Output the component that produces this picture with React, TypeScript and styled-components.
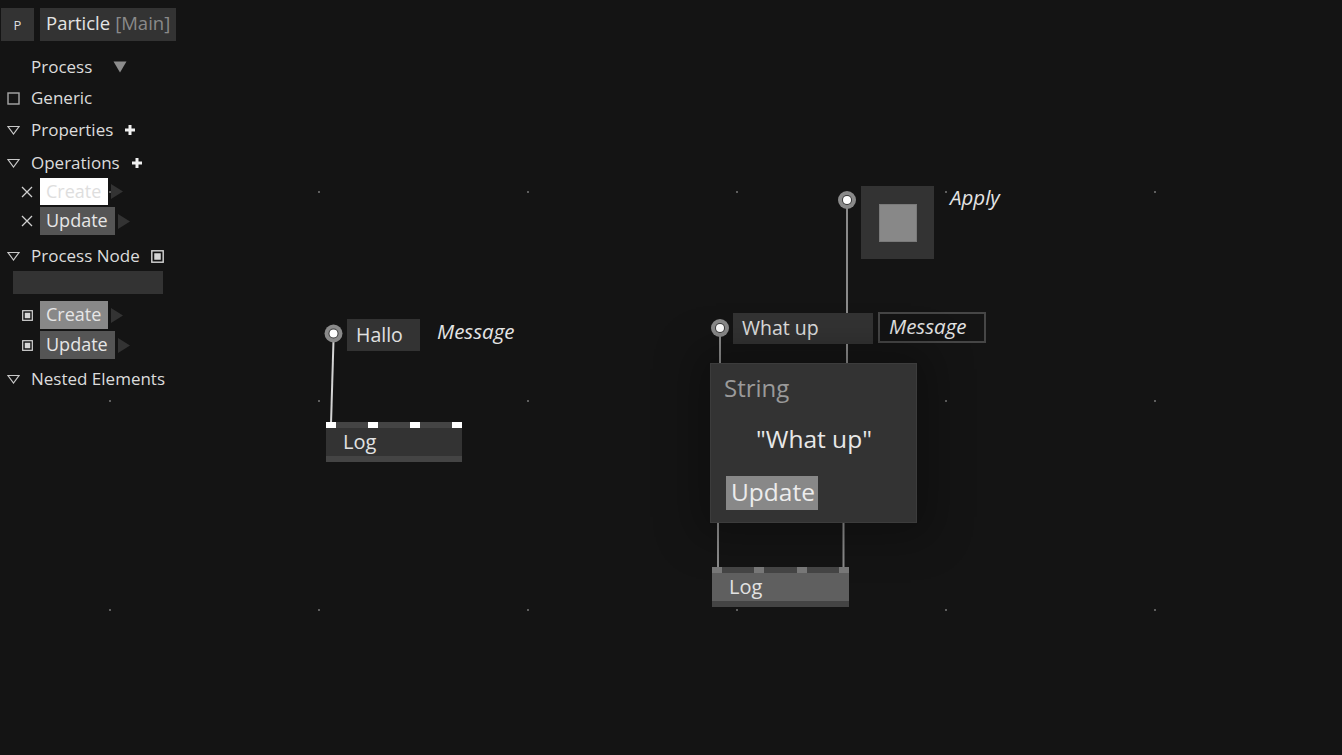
import React from 'react';
import styled, { createGlobalStyle } from 'styled-components';

const Global = createGlobalStyle`
  html, body { margin: 0; padding: 0; background: #141414; }
  body { font-family: "Open Sans", "Noto Sans", sans-serif; color: #dcdcdc; overflow: hidden; }
  #root { width: 1342px; height: 755px; }
`;

const Page = styled.div`
  position: relative;
  width: 1342px;
  height: 755px;
  background-color: #141414;
  background-image: radial-gradient(circle at 1px 1px, #5e5e5e 0.9px, transparent 1.4px);
  background-size: 209px 209px;
  background-position: 109px 191px;
  overflow: hidden;
`;

/* ---------- Sidebar ---------- */

const Sidebar = styled.aside`
  position: relative;
  z-index: 3;
  width: 180px;
  padding: 8px 0 0 1px;
  display: flex;
  flex-direction: column;
`;

const TopBar = styled.div`
  display: flex;
  gap: 6px;
  height: 33px;
`;

const SquareButton = styled.div`
  width: 33px;
  height: 33px;
  background: #333;
  color: #ddd;
  font-size: 13px;
  display: flex;
  align-items: center;
  justify-content: center;
`;

const TitleButton = styled.div`
  width: 136px;
  height: 33px;
  box-sizing: border-box;
  padding: 0 0 4px 6px;
  background: #333;
  color: #e4e4e4;
  font-size: 18.5px;
  display: flex;
  align-items: center;
  white-space: nowrap;
`;

const Dim = styled.span`
  color: #8a8a8a;
  margin-left: 5px;
`;

const Row = styled.div<{ $h: number; $mt?: number; $pl?: number }>`
  display: flex;
  align-items: center;
  height: ${(p) => p.$h}px;
  margin-top: ${(p) => p.$mt ?? 0}px;
  padding-left: ${(p) => p.$pl ?? 6}px;
  font-size: 17px;
  color: #dcdcdc;
  white-space: nowrap;
`;

const IconSlot = styled.span<{ $w: number; $mr: number }>`
  width: ${(p) => p.$w}px;
  margin-right: ${(p) => p.$mr}px;
  display: flex;
  align-items: center;
  justify-content: center;
  flex: none;
`;

const Label = styled.span`
  line-height: 1;
  margin-bottom: 2px;
`;

const Trailing = styled.span<{ $ml: number }>`
  margin-left: ${(p) => p.$ml}px;
  display: flex;
  align-items: center;
`;

const OpBox = styled.div<{ $tone: 'white' | 'gray' | 'dark'; $h: number }>`
  height: ${(p) => p.$h}px;
  padding: 0 7px 2px 6px;
  box-sizing: border-box;
  display: flex;
  align-items: center;
  font-size: 18px;
  background: ${(p) => (p.$tone === 'white' ? '#ffffff' : p.$tone === 'gray' ? '#888888' : '#555555')};
  color: ${(p) => (p.$tone === 'white' ? '#dedede' : '#e6e6e6')};
`;

const InputBar = styled.div`
  margin: 0 0 0 12px;
  width: 150px;
  height: 23px;
  background: #333;
`;

/* ---------- icons ---------- */

const DownOutline = () => (
  <svg width="13" height="10" viewBox="0 0 13 10">
    <polygon points="1,1.5 12,1.5 6.5,9" fill="none" stroke="#c8c8c8" strokeWidth="1.2" strokeLinejoin="miter" />
  </svg>
);

const CheckBox = () => (
  <svg width="13" height="13" viewBox="0 0 13 13">
    <rect x="1" y="1" width="11" height="11" fill="none" stroke="#a8a8a8" strokeWidth="1.4" />
  </svg>
);

const Plus = () => (
  <svg width="10" height="10" viewBox="0 0 10 10">
    <rect x="3.5" y="0" width="3" height="10" fill="#f0f0f0" />
    <rect x="0" y="3.5" width="10" height="3" fill="#f0f0f0" />
  </svg>
);

const Cross = () => (
  <svg width="12" height="12" viewBox="0 0 12 12">
    <path d="M1 1 L11 11 M11 1 L1 11" stroke="#d0d0d0" strokeWidth="1.3" />
  </svg>
);

const Boxed = ({ size }: { size: number }) => (
  <svg width={size} height={size} viewBox="0 0 12 12">
    <rect x="0.75" y="0.75" width="10.5" height="10.5" fill="none" stroke="#d6d6d6" strokeWidth="1.3" />
    <rect x="3" y="3" width="6" height="6" fill="#d6d6d6" />
  </svg>
);

const DownFilled = () => (
  <svg width="14" height="12" viewBox="0 0 14 12">
    <polygon points="0.5,0.5 13.5,0.5 7,11.5" fill="#8c8c8c" />
  </svg>
);

const RightFilled = () => (
  <svg width="12" height="15" viewBox="0 0 12 15">
    <polygon points="0,0 12,7.5 0,15" fill="#333333" />
  </svg>
);

/* ---------- Canvas ---------- */

const Wires = styled.svg`
  position: absolute;
  inset: 0;
  z-index: 1;
`;

const Node = styled.div<{ $x: number; $y: number }>`
  position: absolute;
  left: ${(p) => p.$x}px;
  top: ${(p) => p.$y}px;
  z-index: 2;
`;

const ValueBox = styled.div<{ $w: number; $h: number }>`
  width: ${(p) => p.$w}px;
  height: ${(p) => p.$h}px;
  box-sizing: border-box;
  padding: 0 0 2px 9px;
  background: #333;
  color: #e0e0e0;
  font-size: 19.5px;
  display: flex;
  align-items: center;
`;

const ItalicTag = styled.div<{ $framed?: boolean }>`
  height: 31px;
  box-sizing: border-box;
  padding: ${(p) => (p.$framed ? '0 0 3px 9px' : '0 0 3px 0')};
  ${(p) => (p.$framed ? 'width: 108px; border: 2px solid #464646;' : '')}
  display: flex;
  align-items: center;
  font-size: 20.5px;
  font-style: italic;
  color: #e4e4e4;
  white-space: nowrap;
`;

const ApplyBox = styled.div`
  width: 73px;
  height: 73px;
  background: #333;
  display: flex;
  align-items: center;
  justify-content: center;
`;

const ApplyInner = styled.div`
  width: 36px;
  height: 36px;
  background: #888;
  border: 1px solid #7a7a7a;
`;

const LogNode = styled.div<{ $x: number; $y: number; $w: number }>`
  position: absolute;
  left: ${(p) => p.$x}px;
  top: ${(p) => p.$y}px;
  width: ${(p) => p.$w}px;
  display: flex;
  flex-direction: column;
  z-index: 2;
`;

const PinBar = styled.div`
  height: 6px;
  background: #444;
  display: flex;
  justify-content: space-between;
  align-items: flex-end;
`;

const Pin = styled.span<{ $c: string }>`
  width: 10px;
  height: 6px;
  background: ${(p) => p.$c};
`;

const LogBody = styled.div<{ $bg: string }>`
  height: 28px;
  box-sizing: border-box;
  padding: 0 0 2px 17px;
  background: ${(p) => p.$bg};
  color: #e2e2e2;
  font-size: 20px;
  display: flex;
  align-items: center;
`;

const LogFoot = styled.div`
  height: 6px;
  background: #444;
`;

const StringNode = styled.div`
  position: absolute;
  left: 710px;
  top: 363px;
  width: 207px;
  height: 160px;
  box-sizing: border-box;
  background: #333;
  border: 1px solid #3c3c3c;
  box-shadow: 0 0 40px 14px rgba(0, 0, 0, 0.28);
  padding: 9px 0 0 13px;
  display: flex;
  flex-direction: column;
  z-index: 2;
`;

const NodeTitle = styled.div`
  font-size: 24px;
  color: #9a9a9a;
  line-height: 30px;
`;

const NodeValue = styled.div`
  font-size: 24.5px;
  color: #e8e8e8;
  line-height: 30px;
  margin: 21px 0 0 32px;
`;

const NodeButton = styled.div`
  align-self: flex-start;
  margin: 22px 0 0 2px;
  height: 34px;
  box-sizing: border-box;
  padding: 0 3px 3px 5px;
  background: #888;
  color: #ececec;
  font-size: 24.5px;
  display: flex;
  align-items: center;
`;

const Port = ({ cx, cy }: { cx: number; cy: number }) => (
  <g>
    <circle cx={cx} cy={cy} r={9} fill="#8a8a8a" />
    <circle cx={cx} cy={cy} r={5} fill="#3a3a3a" />
    <circle cx={cx} cy={cy} r={4} fill="#ffffff" />
  </g>
);

function LogBlock({ x, y, w, pin, body }: { x: number; y: number; w: number; pin: string; body: string }) {
  return (
    <LogNode $x={x} $y={y} $w={w}>
      <PinBar>
        <Pin $c={pin} />
        <Pin $c={pin} />
        <Pin $c={pin} />
        <Pin $c={pin} />
      </PinBar>
      <LogBody $bg={body}>Log</LogBody>
      <LogFoot />
    </LogNode>
  );
}

export default function App() {
  return (
    <>
      <Global />
      <Page>
        <Sidebar>
          <TopBar>
            <SquareButton>P</SquareButton>
            <TitleButton>
              Particle<Dim>[Main]</Dim>
            </TitleButton>
          </TopBar>

          <Row $h={30} $mt={11} $pl={30}>
            <Label>Process</Label>
            <Trailing $ml={21}>
              <DownFilled />
            </Trailing>
          </Row>
          <Row $h={30} $mt={1}>
            <IconSlot $w={13} $mr={11}>
              <CheckBox />
            </IconSlot>
            <Label>Generic</Label>
          </Row>
          <Row $h={30} $mt={2}>
            <IconSlot $w={13} $mr={11}>
              <DownOutline />
            </IconSlot>
            <Label>Properties</Label>
            <Trailing $ml={12}>
              <Plus />
            </Trailing>
          </Row>
          <Row $h={30} $mt={3}>
            <IconSlot $w={13} $mr={11}>
              <DownOutline />
            </IconSlot>
            <Label>Operations</Label>
            <Trailing $ml={12}>
              <Plus />
            </Trailing>
          </Row>

          <Row $h={27} $mt={0} $pl={20}>
            <IconSlot $w={12} $mr={7}>
              <Cross />
            </IconSlot>
            <OpBox $tone="white" $h={27}>Create</OpBox>
            <Trailing $ml={3}>
              <RightFilled />
            </Trailing>
          </Row>
          <Row $h={28} $mt={2} $pl={20}>
            <IconSlot $w={12} $mr={7}>
              <Cross />
            </IconSlot>
            <OpBox $tone="dark" $h={28}>Update</OpBox>
            <Trailing $ml={3}>
              <RightFilled />
            </Trailing>
          </Row>

          <Row $h={30} $mt={6}>
            <IconSlot $w={13} $mr={11}>
              <DownOutline />
            </IconSlot>
            <Label>Process Node</Label>
            <Trailing $ml={11}>
              <Boxed size={13} />
            </Trailing>
          </Row>
          <InputBar />

          <Row $h={28} $mt={7} $pl={20}>
            <IconSlot $w={12} $mr={7}>
              <Boxed size={11} />
            </IconSlot>
            <OpBox $tone="gray" $h={28}>Create</OpBox>
            <Trailing $ml={3}>
              <RightFilled />
            </Trailing>
          </Row>
          <Row $h={28} $mt={2} $pl={20}>
            <IconSlot $w={12} $mr={7}>
              <Boxed size={11} />
            </IconSlot>
            <OpBox $tone="dark" $h={28}>Update</OpBox>
            <Trailing $ml={3}>
              <RightFilled />
            </Trailing>
          </Row>

          <Row $h={30} $mt={5}>
            <IconSlot $w={13} $mr={11}>
              <DownOutline />
            </IconSlot>
            <Label>Nested Elements</Label>
          </Row>
        </Sidebar>

        <Wires width="1342" height="755" viewBox="0 0 1342 755">
          <line x1="333.5" y1="340" x2="331" y2="424" stroke="#d4d4d4" strokeWidth="2" />
          <line x1="847" y1="205" x2="847" y2="364" stroke="#8a8a8a" strokeWidth="2" />
          <line x1="720" y1="333" x2="720" y2="364" stroke="#8a8a8a" strokeWidth="2" />
          <line x1="718" y1="522" x2="718" y2="568" stroke="#8a8a8a" strokeWidth="2" />
          <line x1="843.5" y1="522" x2="843.5" y2="568" stroke="#8a8a8a" strokeWidth="2" />
          <Port cx={333.5} cy={333.5} />
          <Port cx={847} cy={200} />
          <Port cx={720} cy={328} />
        </Wires>

        <Node $x={347} $y={319}>
          <ValueBox $w={73} $h={32}>Hallo</ValueBox>
        </Node>
        <Node $x={437} $y={317}>
          <ItalicTag>Message</ItalicTag>
        </Node>

        <LogBlock x={326} y={422} w={136} pin="#ffffff" body="#333333" />

        <Node $x={861} $y={186}>
          <ApplyBox>
            <ApplyInner />
          </ApplyBox>
        </Node>
        <Node $x={950} $y={183}>
          <ItalicTag>Apply</ItalicTag>
        </Node>

        <Node $x={733} $y={313}>
          <ValueBox $w={140} $h={31}>What up</ValueBox>
        </Node>
        <Node $x={878} $y={312}>
          <ItalicTag $framed>Message</ItalicTag>
        </Node>

        <StringNode>
          <NodeTitle>String</NodeTitle>
          <NodeValue>"What up"</NodeValue>
          <NodeButton>Update</NodeButton>
        </StringNode>

        <LogBlock x={712} y={567} w={137} pin="#777777" body="#5f5f5f" />
      </Page>
    </>
  );
}
